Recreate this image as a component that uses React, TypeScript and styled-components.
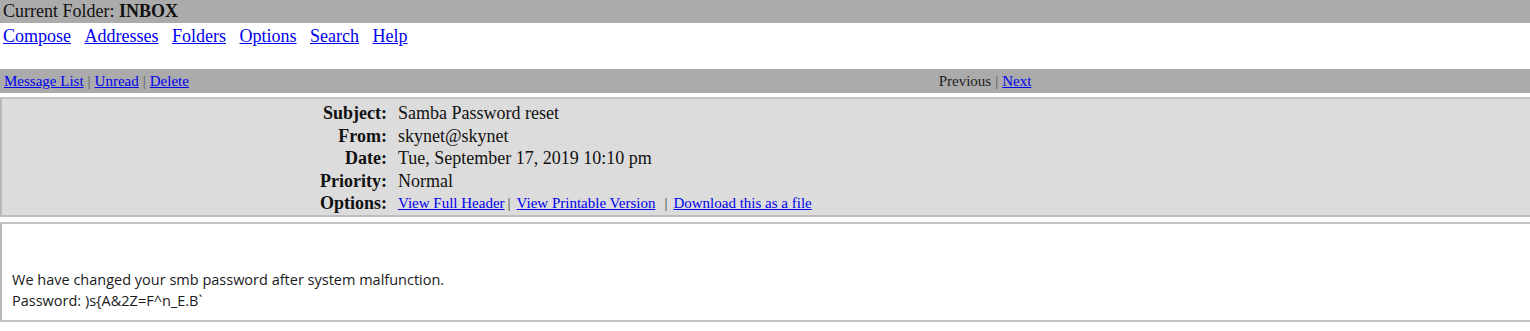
import { createGlobalStyle } from 'styled-components';
import styled from 'styled-components';

const GlobalStyle = createGlobalStyle`
  html, body {
    margin: 0;
    padding: 0;
    background: #ffffff;
    overflow: hidden;
  }
  body {
    font-family: "Liberation Serif", "Times New Roman", serif;
    color: #000000;
  }
  a {
    color: #0000ee;
    text-decoration: underline;
  }
`;

const FolderBar = styled.div`
  background: #ababab;
  height: 23px;
  line-height: 23px;
  padding-left: 3px;
  font-size: 18px;
  color: #111;
`;

const MainMenu = styled.nav`
  height: 46px;
  padding: 1px 3px 0;
  box-sizing: border-box;
  display: flex;
  align-items: flex-start;
  gap: 13.5px;
  font-size: 18px;
  line-height: 25px;
`;

const ActionBar = styled.div`
  background: #ababab;
  height: 24px;
  display: grid;
  grid-template-columns: 440px 1fr;
  align-items: center;
  font-size: 15px;
  color: #222;
`;

const ActionCell = styled.div<{ $center?: boolean }>`
  padding-left: ${({ $center }) => ($center ? '0' : '4px')};
  text-align: ${({ $center }) => ($center ? 'center' : 'left')};
`;

const Sep = styled.span`
  color: #555;
  margin: 0 4px;
`;

const HeaderBox = styled.div`
  margin-top: 4px;
  background: #dcdcdc;
  border-top: 2px solid #c4c4c4;
  border-left: 2px solid #b8b8b8;
  border-bottom: 2px solid #bdbdbd;
  padding: 3px 0 0;
`;

const HeaderRow = styled.div`
  display: grid;
  grid-template-columns: 385px 1fr;
  column-gap: 11px;
  height: 22.5px;
  align-items: center;
  font-size: 18px;
  line-height: 22px;
  color: #111;
`;

const Label = styled.div`
  text-align: right;
  font-weight: bold;
`;

const Value = styled.div<{ $small?: boolean }>`
  font-size: ${({ $small }) => ($small ? '15px' : '18px')};
  white-space: nowrap;
`;

const OptSep = styled.span<{ $wide?: boolean }>`
  color: #333;
  margin: 0 6px 0 ${({ $wide }) => ($wide ? '9px' : '3px')};
`;

const BodyBox = styled.div`
  margin-top: 5px;
  background: #ffffff;
  border-top: 2px solid #c4c4c4;
  border-left: 2px solid #b8b8b8;
  border-bottom: 2px solid #c4c4c4;
  height: 100px;
  padding: 0 10px;
  box-sizing: border-box;
`;

const BodyText = styled.pre`
  margin: 0;
  padding-top: 45px;
  font-family: "Open Sans", "Noto Sans", sans-serif;
  font-size: 14.5px;
  line-height: 21px;
  color: #1a1a1a;
`;

const headers = [
  { label: 'Subject:', value: 'Samba Password reset' },
  { label: 'From:', value: 'skynet@skynet' },
  { label: 'Date:', value: 'Tue, September 17, 2019 10:10 pm' },
  { label: 'Priority:', value: 'Normal' },
];

export default function App() {
  return (
    <>
      <GlobalStyle />
      <FolderBar>
        Current Folder: <b>INBOX</b>
      </FolderBar>
      <MainMenu>
        <a href="#">Compose</a>
        <a href="#">Addresses</a>
        <a href="#">Folders</a>
        <a href="#">Options</a>
        <a href="#">Search</a>
        <a href="#">Help</a>
      </MainMenu>
      <ActionBar>
        <ActionCell>
          <a href="#">Message List</a>
          <Sep>|</Sep>
          <a href="#">Unread</a>
          <Sep>|</Sep>
          <a href="#">Delete</a>
        </ActionCell>
        <ActionCell $center>
          Previous<Sep>|</Sep>
          <a href="#">Next</a>
        </ActionCell>
      </ActionBar>
      <HeaderBox>
        {headers.map((h) => (
          <HeaderRow key={h.label}>
            <Label>{h.label}</Label>
            <Value>{h.value}</Value>
          </HeaderRow>
        ))}
        <HeaderRow>
          <Label>Options:</Label>
          <Value $small>
            <a href="#">View Full Header</a>
            <OptSep>|</OptSep>
            <a href="#">View Printable Version</a>
            <OptSep $wide>|</OptSep>
            <a href="#">Download this as a file</a>
          </Value>
        </HeaderRow>
      </HeaderBox>
      <BodyBox>
        <BodyText>
          {'We have changed your smb password after system malfunction.\nPassword: )s{A&2Z=F^n_E.B`'}
        </BodyText>
      </BodyBox>
    </>
  );
}
